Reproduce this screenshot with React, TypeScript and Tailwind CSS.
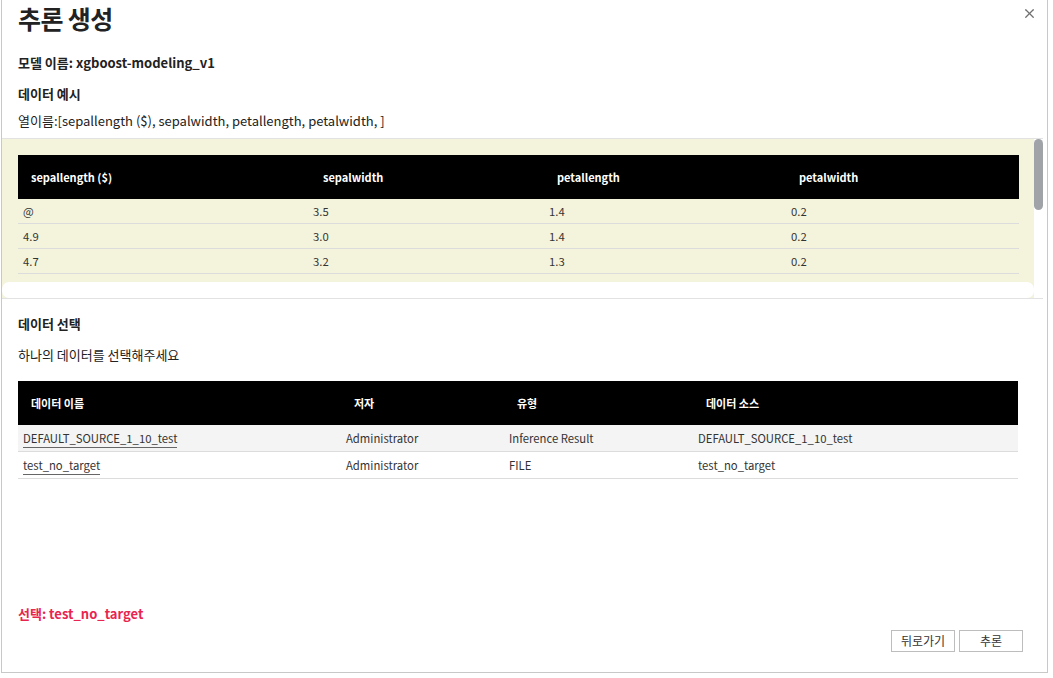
import { X } from 'lucide-react'

const sampleCols = [
  { label: 'sepallength ($)', w: 'w-[290px]', hp: 'pl-[13px]' },
  { label: 'sepalwidth', w: 'w-[236px]', hp: 'pl-[15px]' },
  { label: 'petallength', w: 'w-[242px]', hp: 'pl-[13px]' },
  { label: 'petalwidth', w: 'flex-1', hp: 'pl-[13px]' },
]

const sampleRows = [
  ['@', '3.5', '1.4', '0.2'],
  ['4.9', '3.0', '1.4', '0.2'],
  ['4.7', '3.2', '1.3', '0.2'],
  ['4.6', '3.1', '1.5', '0.2'],
]

const dataCols = [
  { label: '데이터 이름', w: 'w-[323px]' },
  { label: '저자', w: 'w-[163px]' },
  { label: '유형', w: 'w-[189px]' },
  { label: '데이터 소스', w: 'flex-1' },
]

const dataRows = [
  { name: 'DEFAULT_SOURCE_1_10_test', author: 'Administrator', type: 'Inference Result', source: 'DEFAULT_SOURCE_1_10_test' },
  { name: 'test_no_target', author: 'Administrator', type: 'FILE', source: 'test_no_target' },
]

export default function App() {
  return (
    <div
      className="w-[1053px] h-[678px] bg-white pl-[1px] text-[#222]"
      style={{ fontFamily: '"Noto Sans CJK KR", "Noto Sans", sans-serif' }}
    >
      <div className="relative w-[1047px] h-[673px] border-x border-b border-[#c8c8c8] flex flex-col">
        {/* close */}
        <button type="button" className="absolute right-[10px] top-[6px] text-[#6f6f6f]" aria-label="close">
          <X size={15} strokeWidth={2} />
        </button>

        <div className="px-4">
          <h1 className="h-[36px] leading-[36px] text-[25px] font-bold tracking-tight">추론 생성</h1>
          <p className="mt-[17px] h-[20px] leading-[20px] text-[13px] font-bold">모델 이름: xgboost-modeling_v1</p>
          <p className="mt-[11px] h-[20px] leading-[20px] text-[13px] font-bold">데이터 예시</p>
          <p className="mt-[7px] h-[20px] leading-[20px] text-[13px]">열이름:[sepallength ($), sepalwidth, petallength, petalwidth, ]</p>
        </div>

        {/* sample panel */}
        <div className="mt-[7px] mr-[4px] border-y border-[#e2e2e2] flex">
          <div className="flex-1 flex flex-col bg-[#f4f3dc]">
            <div className="h-[143px] overflow-hidden pl-4 pr-[15px] pt-4">
              <div className="flex h-[44px] bg-black text-white text-[11px] font-bold items-center">
                {sampleCols.map((c) => (
                  <div key={c.label} className={`${c.w} ${c.hp}`}>{c.label}</div>
                ))}
              </div>
              {sampleRows.map((r, i) => (
                <div key={i} className="flex h-[25px] items-center border-b border-[#dcdcdc] text-[11.3px] text-[#333]">
                  {r.map((v, j) => (
                    <div key={j} className={`${sampleCols[j].w} pl-[5px]`}>{v}</div>
                  ))}
                </div>
              ))}
            </div>
            <div className="h-[16px] bg-white rounded-[7px]" />
          </div>
          <div className="w-[9px] bg-white">
            <div className="h-[71px] bg-[#a0a3a8] rounded-full" />
          </div>
        </div>

        <div className="px-4">
          <p className="mt-[15px] h-[20px] leading-[20px] text-[13px] font-bold">데이터 선택</p>
          <p className="mt-[11px] h-[20px] leading-[20px] text-[13px]">하나의 데이터를 선택해주세요</p>

          <div className="mt-[16px] w-[1000px]">
            <div className="flex h-[44px] bg-black text-white text-[11px] font-bold items-center">
              {dataCols.map((c) => (
                <div key={c.label} className={`${c.w} pl-[13px]`}>{c.label}</div>
              ))}
            </div>
            {dataRows.map((r, i) => (
              <div
                key={r.name}
                className={`flex h-[27px] items-center border-b border-[#dcdcdc] text-[11.3px] text-[#333] ${i === 0 ? 'bg-[#f4f4f4] h-[26px]' : ''}`}
              >
                <div className={`${dataCols[0].w} pl-[5px]`}>
                  <span className="border-b border-[#666] pb-[1px]">{r.name}</span>
                </div>
                <div className={`${dataCols[1].w} pl-[5px]`}>{r.author}</div>
                <div className={`${dataCols[2].w} pl-[5px]`}>{r.type}</div>
                <div className={`${dataCols[3].w} pl-[5px]`}>{r.source}</div>
              </div>
            ))}
          </div>

          <p className="mt-[125px] h-[20px] leading-[20px] text-[13px] font-bold text-[#e9254f]">선택: test_no_target</p>

          <div className="mt-[6px] flex justify-end gap-[4px] pr-[8px]">
            <button type="button" className="w-[64px] h-[22px] border border-[#bdbdbd] bg-white text-[12px] text-[#333]">뒤로가기</button>
            <button type="button" className="w-[64px] h-[22px] border border-[#bdbdbd] bg-white text-[12px] text-[#333]">추론</button>
          </div>
        </div>
      </div>
    </div>
  )
}
